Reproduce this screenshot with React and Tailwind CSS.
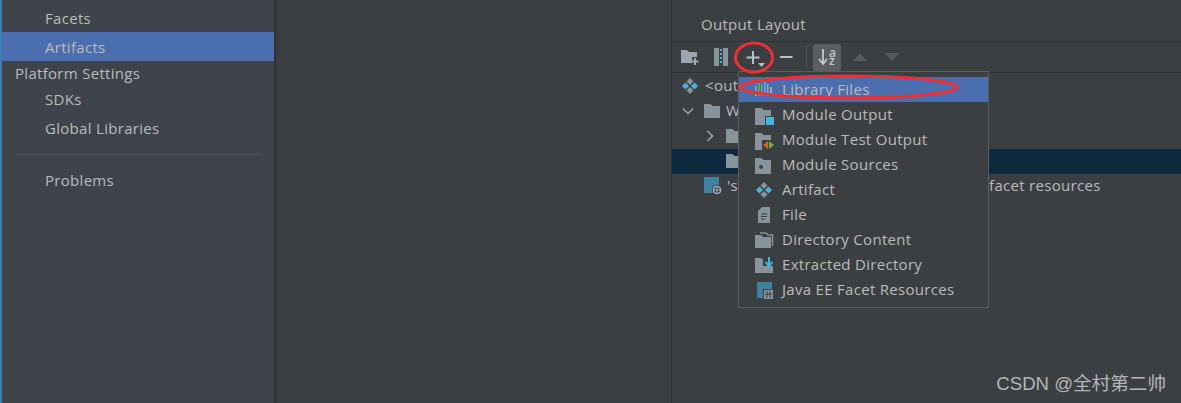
import React from "react";

const font = { fontFamily: '"Open Sans", "Noto Sans CJK SC", sans-serif', letterSpacing: "0.3px" };

const grey = "#88949c";

const Folder = ({ y = 0, h = 12 }) => (
  <path transform={`translate(0 ${y})`} d={`M0 1h6.500l2 2H16v${h}H0z`} fill={grey} />
);

const Artifact = () => (
  <svg width="18" height="18" viewBox="0 0 18 18">
    <path d="M9 1l3.500 3.500L9 8 5.500 4.500z" fill={grey} />
    <path d="M9 10l3.500 3.500L9 17l-3.500-3.500z" fill={grey} />
    <path d="M4.500 5.500L8 9l-3.500 3.500L1 9z" fill="#40b6e0" />
    <path d="M13.500 5.500L17 9l-3.500 3.500L10 9z" fill="#40b6e0" />
  </svg>
);

const LibraryIcon = () => (
  <svg width="20" height="18" viewBox="0 0 20 18">
    <rect x="0" y="5" width="1.500" height="10" fill="#9aa7b0" />
    <rect x="3" y="2" width="2" height="13" fill="#62b543" opacity="0.8" />
    <rect x="6" y="3" width="1.500" height="12" fill="#d9a343" opacity="0.6" />
    <rect x="9" y="1" width="2" height="14" fill="#40b6e0" opacity="0.85" />
    <rect x="12" y="3" width="1.500" height="12" fill="#9aa7b0" />
    <rect x="15" y="6" width="2" height="9" fill="#9aa7b0" />
  </svg>
);

const ModuleOutput = () => (
  <svg width="20" height="20" viewBox="0 0 20 20">
    <Folder y={2} h={15} />
    <rect x="10" y="11" width="9" height="9" fill="#3c3f41" />
    <rect x="11" y="12" width="8" height="8" fill="#40b6e0" />
  </svg>
);

const ModuleTest = () => (
  <svg width="20" height="20" viewBox="0 0 20 20">
    <Folder y={2} h={15} />
    <rect x="7" y="10" width="13" height="10" fill="#3c3f41" />
    <path d="M13 11v8l-5-4z" fill="#e05a1c" />
    <path d="M14 11v8l5-4z" fill="#62b543" />
  </svg>
);

const ModuleSources = () => (
  <svg width="20" height="20" viewBox="0 0 20 20">
    <Folder y={2} h={14} />
    <circle cx="6" cy="12" r="2" fill="#3c3f41" />
  </svg>
);

const FileIcon = () => (
  <svg width="18" height="18" viewBox="0 0 18 18">
    <path d="M7 1h8v16H3V5z" fill={grey} />
    <path d="M6 8h6M6 10.500h6M6 13h4" stroke="#3c3f41" strokeWidth="1" />
  </svg>
);

const DirContent = () => (
  <svg width="20" height="18" viewBox="0 0 20 18">
    <path d="M5 2h6l2 2h4.500v11" fill="none" stroke={grey} strokeWidth="1.500" />
    <path d="M0 4h6l2 2h8v11H0z" fill={grey} />
  </svg>
);

const Extracted = () => (
  <svg width="20" height="18" viewBox="0 0 20 18">
    <path d="M0 2h6l2 2h10v13H0z" fill={grey} />
    <rect x="8" y="0" width="12" height="11" fill="#3c3f41" />
    <path d="M8 11l4 0 2 2 2-2 2 0v-1H8z" fill={grey} />
    <path d="M14 1v8M10.500 6l3.500 4 3.500-4" fill="none" stroke="#40b6e0" strokeWidth="2" />
  </svg>
);

const FacetIcon = () => (
  <svg width="20" height="18" viewBox="0 0 20 18">
    <rect x="2" y="1" width="15" height="16" fill="#3d81a3" />
    <rect x="8" y="8" width="11" height="10" fill="#3c3f41" />
    <rect x="9" y="9" width="9" height="9" fill={grey} />
    <path d="M12 10v7M15 10v7M10 13h7" stroke="#3c3f41" strokeWidth="1" />
  </svg>
);

const menu = [
  { label: "Library Files", icon: <LibraryIcon />, selected: true },
  { label: "Module Output", icon: <ModuleOutput /> },
  { label: "Module Test Output", icon: <ModuleTest /> },
  { label: "Module Sources", icon: <ModuleSources /> },
  { label: "Artifact", icon: <Artifact /> },
  { label: "File", icon: <FileIcon /> },
  { label: "Directory Content", icon: <DirContent /> },
  { label: "Extracted Directory", icon: <Extracted /> },
  { label: "Java EE Facet Resources", icon: <FacetIcon /> },
];

const SideRow = ({ children, selected, h = "h-[29px]", pl = "pl-[43px]" }) => (
  <div className={`flex items-center pt-px ${h} ${pl} ${selected ? "bg-[#4b6eaf]" : ""}`}>
    {children}
  </div>
);

const TreeRow = ({ children, pl, selected }) => (
  <div className={`flex items-center h-[25px] pb-[2px] ${pl} ${selected ? "bg-[#0d293e]" : ""}`}>
    {children}
  </div>
);

export default function App() {
  return (
    <div
      className="relative flex h-[403px] w-[1181px] overflow-hidden bg-[#3c3f41] text-[15px] text-[#bbbbbb]"
      style={font}
    >
      {/* left settings list */}
      <div className="w-[276px] shrink-0 border-l-2 border-l-[#3d7fb5] border-r-2 border-r-[#323232] bg-[#3e434c] pt-[3px]">
        <SideRow>Facets</SideRow>
        <SideRow selected>Artifacts</SideRow>
        <SideRow h="h-[23px]" pl="pl-[13px]">Platform Settings</SideRow>
        <SideRow>SDKs</SideRow>
        <SideRow>Global Libraries</SideRow>
        <div className="mx-[13px] mt-[12px] mb-[10px] h-px bg-[#494d55]" />
        <SideRow>Problems</SideRow>
      </div>

      {/* middle empty pane */}
      <div className="w-[395px] shrink-0" />

      {/* output layout */}
      <div className="flex-1 border-l border-[#323232]">
        <div className="flex h-[41px] items-end pl-[29px] pb-[6px]">Output Layout</div>
        <div className="flex h-[32px] items-center border-y border-[#323232] pl-[8px]">
          <svg width="20" height="18" viewBox="0 0 20 18">
            <path d="M1 2h6l2 2h8v5h-5v6H1z" fill="#9aa7b0" />
            <path d="M15 10v7M11.500 13.500h7" stroke="#9aa7b0" strokeWidth="2" />
          </svg>
          <svg className="ml-[14px]" width="15" height="18" viewBox="0 0 15 18">
            <rect x="0" y="0" width="14" height="18" fill={grey} />
            <path d="M5 0h4v18H5z" fill="#3c3f41" />
            <path d="M6 1h2v2H6zM6 5h2v2H6zM6 9h2v2H6zM6 13h2v2H6z" fill="#40b6e0" />
          </svg>
          <svg className="ml-[16px]" width="22" height="22" viewBox="0 0 22 22">
            <path d="M8 5v13M1.500 11.500h13" stroke="#b9c0c6" strokeWidth="2" />
            <path d="M13 17h7l-3.500 4z" fill="#b9c0c6" />
          </svg>
          <svg className="ml-[12px]" width="16" height="16" viewBox="0 0 16 16">
            <path d="M1 8h12.500" stroke="#b9c0c6" strokeWidth="2" />
          </svg>
          <div className="ml-[11px] h-[22px] w-px bg-[#55585a]" />
          <div className="ml-[6px] flex h-[27px] w-[28px] items-center justify-center gap-px rounded-[3px] bg-[#5c5f61]">
            <svg width="10" height="16" viewBox="0 0 10 16">
              <path d="M5 0v15M1 10l4 5 4-5" fill="none" stroke="#c4c9cd" strokeWidth="1.800" />
            </svg>
            <div className="flex flex-col text-[12px] font-semibold leading-[8px] tracking-normal text-[#c4c9cd]">
              <span>a</span>
              <span>z</span>
            </div>
          </div>
          <svg className="ml-[11px]" width="16" height="10" viewBox="0 0 16 10">
            <path d="M8 1l7 8H1z" fill="#585b5d" />
          </svg>
          <svg className="ml-[16px]" width="16" height="10" viewBox="0 0 16 10">
            <path d="M1 1h14l-7 8z" fill="#585b5d" />
          </svg>
        </div>
        <div className="pt-px">
          <TreeRow pl="pl-[9px]">
            <Artifact />
            <span className="ml-[6px]">&lt;out</span>
          </TreeRow>
          <TreeRow pl="pl-[9px]">
            <svg width="14" height="14" viewBox="0 0 14 14">
              <path d="M2 4.500l5 5 5-5" fill="none" stroke="#9aa7b0" strokeWidth="1.500" />
            </svg>
            <svg className="ml-[9px]" width="18" height="16" viewBox="0 0 18 16">
              <Folder />
            </svg>
            <span className="ml-[4px]">W</span>
          </TreeRow>
          <TreeRow pl="pl-[31px]">
            <svg width="14" height="14" viewBox="0 0 14 14">
              <path d="M4.500 2l5 5-5 5" fill="none" stroke="#9aa7b0" strokeWidth="1.500" />
            </svg>
            <svg className="ml-[9px]" width="18" height="16" viewBox="0 0 18 16">
              <Folder />
            </svg>
          </TreeRow>
          <TreeRow pl="pl-[54px]" selected>
            <svg width="18" height="16" viewBox="0 0 18 16">
              <Folder />
            </svg>
          </TreeRow>
          <TreeRow pl="pl-[32px]">
            <svg width="20" height="18" viewBox="0 0 20 18">
              <rect x="0" y="0" width="15" height="16" fill="#3d81a3" />
              <circle cx="13" cy="13" r="5" fill="#3c3f41" />
              <circle cx="13" cy="13" r="3.500" fill="none" stroke="#b9c0c6" strokeWidth="1.200" />
              <path d="M9.500 13h7M13 9.500v7" stroke="#b9c0c6" strokeWidth="0.800" />
            </svg>
            <span className="ml-[3px]">'s</span>
            <span className="ml-[251px]">facet resources</span>
          </TreeRow>
        </div>
      </div>

      {/* popup menu */}
      <div className="absolute left-[738px] top-[71px] h-[237px] w-[251px] border border-[#5a5d5f] bg-[#3c3f41] pt-[5px]">
        {menu.map((m) => (
          <div
            key={m.label}
            className={`flex h-[25px] items-center ${m.selected ? "bg-[#4b6eaf]" : ""}`}
          >
            <div className="ml-[16px] flex w-[27px] shrink-0 items-center">{m.icon}</div>
            <span>{m.label}</span>
          </div>
        ))}
      </div>

      {/* red annotations */}
      <svg className="pointer-events-none absolute left-0 top-0" width="1181" height="403">
        <ellipse cx="754" cy="57.500" rx="18.500" ry="14.500" fill="none" stroke="#ee2f36" strokeWidth="3" />
        <ellipse cx="848.500" cy="87" rx="109" ry="11" fill="none" stroke="#ee2f36" strokeWidth="3" />
      </svg>

      {/* watermark */}
      <div
        className="absolute right-[15px] top-[372px] text-[18.600px] leading-6 tracking-normal text-[#b4b6b8]"
        style={{ fontFamily: '"Liberation Sans", "Noto Sans CJK SC", sans-serif' }}
      >
        CSDN @全村第二帅
      </div>
    </div>
  );
}
